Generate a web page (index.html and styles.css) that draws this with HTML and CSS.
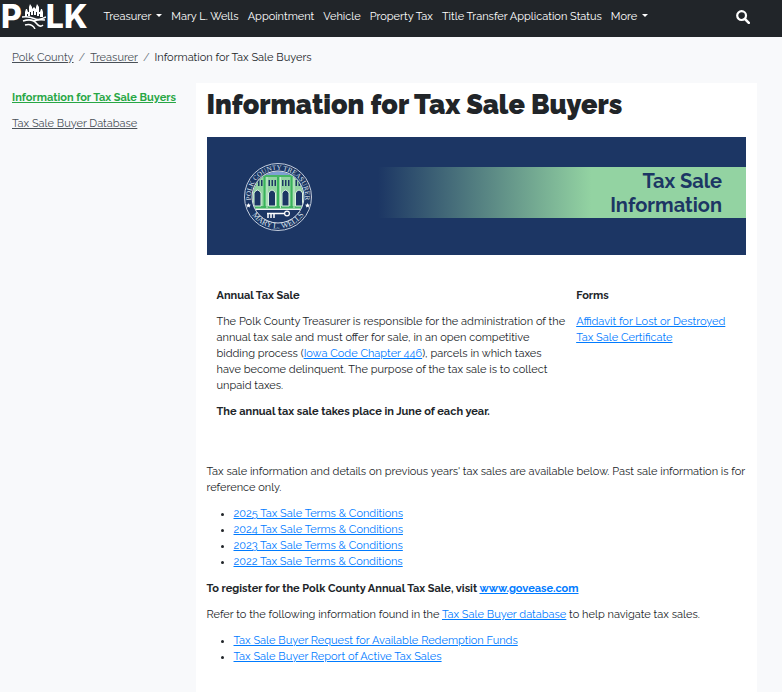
FILE: index.html
```html
<!DOCTYPE html>
<html lang="en">
<head>
  <meta charset="UTF-8">
  <meta name="viewport" content="width=device-width, initial-scale=1">
  <title>Information for Tax Sale Buyers</title>
  <link rel="stylesheet" href="styles.css">
</head>
<body>
  <header class="navbar">
    <a class="brand" href="#" aria-label="Polk County">
      <span>P</span>
      <svg class="brand-icon" viewBox="0 0 24 25" aria-hidden="true">
        <path fill="#fff" d="M3 13V8l1-3h1l1 3h1V3l1-3 2 3v2l2-2 2 2V3l1-3 2 3v5h1l1-3h1l1 3v5h-3v-3h-1v2h-2V8h-1v3h-2V7h-1v4H9V8H8v4H6v-2H5v3z"/>
        <g fill="none" stroke="#fff" stroke-width="1.5">
          <path d="M0 13q7-1 12 1.500T24 13"/>
          <path d="M1 17q9-3 13 2t7 2"/>
          <path d="M3 21q7-2 10 4"/>
          <path d="M12 17q5-2 11-1"/>
        </g>
      </svg>
      <span>LK</span>
    </a>
    <nav class="nav-links">
      <a class="dropdown" href="#">Treasurer</a>
      <a href="#">Mary L. Wells</a>
      <a href="#">Appointment</a>
      <a href="#">Vehicle</a>
      <a href="#">Property Tax</a>
      <a href="#">Title Transfer Application Status</a>
      <a class="dropdown" href="#">More</a>
    </nav>
    <button class="search-btn" type="button" aria-label="Search">
      <svg viewBox="0 0 14 14" aria-hidden="true">
        <circle cx="5.6" cy="5.6" r="4.4" fill="none" stroke="#fff" stroke-width="2.2"/>
        <path d="M8.8 8.8l4 4" stroke="#fff" stroke-width="2.6" stroke-linecap="round"/>
      </svg>
    </button>
  </header>

  <nav class="breadcrumb" aria-label="Breadcrumb">
    <a href="#">Polk County</a>
    <span class="sep">/</span>
    <a href="#">Treasurer</a>
    <span class="sep">/</span>
    <span>Information for Tax Sale Buyers</span>
  </nav>

  <div class="page">
    <aside class="sidebar">
      <a class="active" href="#">Information for Tax Sale Buyers</a>
      <a href="#">Tax Sale Buyer Database</a>
    </aside>

    <main class="content">
      <h1>Information for Tax Sale Buyers</h1>

      <div class="banner">
        <svg class="seal" viewBox="0 0 70 70" role="img" aria-label="Polk County Treasurer seal">
          <defs>
            <path id="arc-top" d="M9.7 45A27.2 27.2 0 1 1 60.3 45"/>
            <path id="arc-bottom" d="M5 44.6A31.5 31.5 0 0 0 65 44.6"/>
            <clipPath id="inner"><circle cx="35" cy="35" r="25.5"/></clipPath>
          </defs>
          <circle cx="35" cy="35" r="33.5" fill="#1c3664" stroke="#c3cddc"/>
          <g clip-path="url(#inner)">
            <rect x="8" y="8" width="54" height="7" fill="#7f9fd3"/>
            <rect x="8" y="13" width="54" height="35" fill="#93d3a2"/>
            <path d="M8 14h54M8 45h54" stroke="#46b564" stroke-width="2"/>
            <path d="M21.5 15v31M35 15v31M48.5 15v31" stroke="#39b45b" stroke-width="2"/>
            <path d="M24 15v31M37.5 15v31M51 15v31" stroke="#c9ecd0"/>
            <path fill="#1c3664" d="M11 18h2v6h-2zm4 0h1.500v6H15zm3 0h1.500v6H18zM25.500 18h1.500v6h-1.500zm3 0H30v6h-1.500zm3 0H33v6h-1.500zM39 18h1.500v6H39zm3 0h1.500v6H42zm3 0h1.500v6H45zM52.500 18H54v6h-1.500zm3 0H57v6h-1.500z"/>
            <path fill="#1c3664" stroke="#d8f2dd" d="M11 44V31q3.500-6 7 0v13zM25.500 44V31q3.500-6 7 0v13zM39 44V31q3.500-6 7 0v13zM52.500 44V31q3.500-6 7 0v13z"/>
            <path d="M8 47.5h54" stroke="#f1f6f4"/>
          </g>
          <circle cx="35" cy="35" r="26" fill="none" stroke="#dde4ed"/>
          <path d="M24 51.500h18M25 52v4M28 52v4M31 52v4" fill="none" stroke="#fff" stroke-width="1.5"/>
          <circle cx="44" cy="51.5" r="2.4" fill="none" stroke="#fff" stroke-width="1.2"/>
          <path fill="#fff" d="M5.500 41l.7 1.500 1.700.2-1.200 1.200.3 1.700-1.500-.8-1.500.8.3-1.700-1.200-1.200 1.700-.2zM64.500 41l.7 1.500 1.700.2-1.200 1.200.3 1.700-1.500-.8-1.500.8.3-1.700-1.200-1.200 1.700-.2z"/>
          <text class="seal-text"><textPath href="#arc-top" startOffset="50%">POLK COUNTY TREASURER</textPath></text>
          <text class="seal-text seal-name"><textPath href="#arc-bottom" startOffset="50%">MARY L. WELLS</textPath></text>
        </svg>
        <div class="banner-title">Tax Sale<br>Information</div>
      </div>

      <div class="columns">
        <section>
          <h2>Annual Tax Sale</h2>
          <p>The Polk County Treasurer is responsible for the administration of the annual tax sale and must offer for sale, in an open competitive bidding process (<a href="#">Iowa Code Chapter 446</a>), parcels in which taxes have become delinquent. The purpose of the tax sale is to collect unpaid taxes.</p>
          <p><strong>The annual tax sale takes place in June of each year.</strong></p>
        </section>
        <section class="forms">
          <h2>Forms</h2>
          <p><a href="#">Affidavit for Lost or Destroyed Tax Sale Certificate</a></p>
        </section>
      </div>

      <p>Tax sale information and details on previous years' tax sales are available below. Past sale information is for reference only.</p>
      <ul>
        <li><a href="#">2025 Tax Sale Terms &amp; Conditions</a></li>
        <li><a href="#">2024 Tax Sale Terms &amp; Conditions</a></li>
        <li><a href="#">2023 Tax Sale Terms &amp; Conditions</a></li>
        <li><a href="#">2022 Tax Sale Terms &amp; Conditions</a></li>
      </ul>
      <p><strong>To register for the Polk County Annual Tax Sale, visit <a href="#">www.govease.com</a></strong></p>
      <p>Refer to the following information found in the <a href="#">Tax Sale Buyer database</a> to help navigate tax sales.</p>
      <ul>
        <li><a href="#">Tax Sale Buyer Request for Available Redemption Funds</a></li>
        <li><a href="#">Tax Sale Buyer Report of Active Tax Sales</a></li>
      </ul>
    </main>
  </div>
</body>
</html>
```
FILE: styles.css
```css
* {
  box-sizing: border-box;
}
body {
  margin: 0;
  background: #f8f9fb;
  color: #212529;
  font-family: Raleway, Lato, sans-serif;
  font-size: 11px;
  line-height: 16px;
}
a {
  color: #007bff;
  text-underline-offset: 1px;
}
.navbar {
  display: flex;
  align-items: center;
  height: 37px;
  padding: 0 32px 4px 1px;
  background: #212529;
}
.brand {
  display: flex;
  align-items: center;
  margin-right: 16px;
  color: #fff;
  font-family: Inter, sans-serif;
  font-size: 32px;
  font-weight: 800;
  line-height: 32px;
  text-decoration: none;
}
.brand-icon {
  width: 24px;
  height: 25px;
}
.nav-links {
  display: flex;
  gap: 9px;
  white-space: nowrap;
}
.nav-links a {
  color: #fff;
  text-decoration: none;
}
.dropdown::after {
  content: "";
  display: inline-block;
  margin-left: 5px;
  vertical-align: 3px;
  border-top: 3px solid #fff;
  border-left: 3px solid transparent;
  border-right: 3px solid transparent;
}
.search-btn {
  margin-left: auto;
  padding: 0;
  border: none;
  background: none;
  cursor: pointer;
}
.search-btn svg {
  display: block;
  width: 14px;
  height: 14px;
}
.breadcrumb {
  display: flex;
  gap: 5px;
  padding: 13px 12px 12px;
}
.breadcrumb a,
.sidebar a {
  color: #495057;
}
.breadcrumb .sep {
  color: #6c757d;
}
.page {
  display: grid;
  grid-template-columns: 1fr 3fr;
  padding-top: 5px;
}
.sidebar {
  display: flex;
  flex-direction: column;
  align-items: flex-start;
  gap: 10px;
  padding: 7px 12px;
  white-space: nowrap;
}
.sidebar .active {
  color: #28a745;
  font-weight: bold;
}
.content {
  margin-right: 25px;
  padding: 6px 11px 24px;
  background: #fff;
}
h1 {
  margin: 0 0 16px;
  font-size: 27px;
  font-weight: 900;
  line-height: 32px;
}
h2 {
  margin: 0 0 10px;
  font-size: 11px;
  font-weight: bold;
  line-height: 16px;
}
p {
  margin: 0 0 10px;
}
ul {
  margin: 0 0 11px;
  padding-left: 27px;
}
.banner {
  display: flex;
  align-items: center;
  justify-content: space-between;
  height: 118px;
  padding-left: 36px;
  background: #1c3664;
}
.seal {
  width: 70px;
  height: 70px;
  margin-top: 2px;
}
.seal-text {
  fill: #dde4ed;
  font-family: "Liberation Serif", serif;
  font-size: 7px;
  text-anchor: middle;
}
.seal-name {
  font-size: 8px;
}
.banner-title {
  width: 73%;
  margin-bottom: 8px;
  padding: 2px 24px 1px 0;
  background: linear-gradient(to right, #1c3664, #93d3a2 58%);
  color: #1c3664;
  font-size: 20px;
  font-weight: bold;
  line-height: 24px;
  text-align: right;
}
.columns {
  display: grid;
  grid-template-columns: 2fr 1fr;
  padding: 33px 0 34px;
}
.columns section {
  padding-left: 10px;
}
.columns .forms {
  padding-right: 10px;
}
```
